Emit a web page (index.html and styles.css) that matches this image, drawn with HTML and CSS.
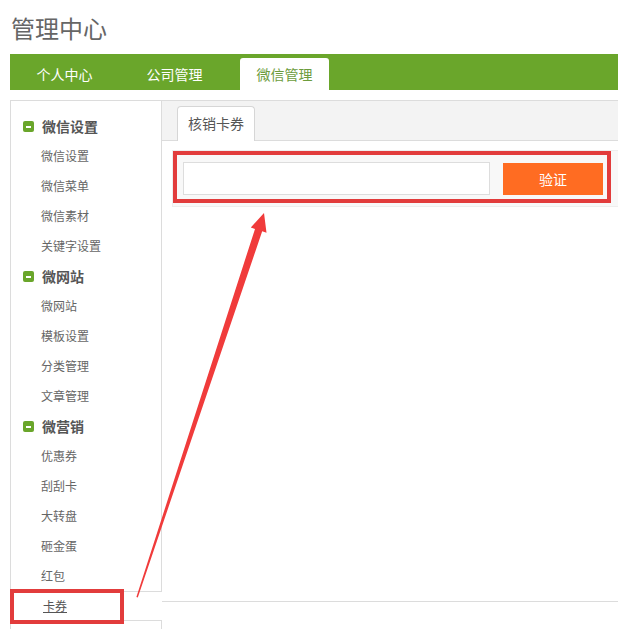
FILE: index.html
```html
<!DOCTYPE html>
<html lang="zh-CN">
<head>
<meta charset="utf-8">
<title>管理中心</title>
<link rel="stylesheet" href="styles.css">
</head>
<body>
<div class="page">
  <h1 class="title">管理中心</h1>
  <div class="nav">
    <div class="nav-item">个人中心</div>
    <div class="nav-item">公司管理</div>
    <div class="nav-item active">微信管理</div>
  </div>
  <div class="main">
    <ul class="sidebar">
      <li class="group"><span class="minus"></span>微信设置</li>
      <li class="item">微信设置</li>
      <li class="item">微信菜单</li>
      <li class="item">微信素材</li>
      <li class="item">关键字设置</li>
      <li class="group"><span class="minus"></span>微网站</li>
      <li class="item">微网站</li>
      <li class="item">模板设置</li>
      <li class="item">分类管理</li>
      <li class="item">文章管理</li>
      <li class="group"><span class="minus"></span>微营销</li>
      <li class="item">优惠券</li>
      <li class="item">刮刮卡</li>
      <li class="item">大转盘</li>
      <li class="item">砸金蛋</li>
      <li class="item">红包</li>
      <li class="item current"><span class="label">卡券</span><span class="mark-box"></span></li>
    </ul>
    <div class="content">
      <div class="tabs">
        <div class="tab">核销卡券</div>
      </div>
      <div class="form-row">
        <input class="code-input" type="text">
        <button class="verify-btn" type="button">验证</button>
        <span class="mark-rect"></span>
      </div>
    </div>
  </div>
  <svg class="arrow" width="618" height="629" viewBox="0 0 618 629" xmlns="http://www.w3.org/2000/svg">
    <polygon points="264,213 266.5,232.8 262.2,231.3 137.8,597.4 136.4,597 255,228.9 250.8,227.6" fill="#f03b3b"/>
  </svg>
</div>
</body>
</html>
```
FILE: styles.css
```css
html, body {
  margin: 0;
  padding: 0;
  overflow: hidden;
  background: #fff;
}
body {
  font-family: "Noto Sans CJK SC", "Noto Sans", sans-serif;
  color: #666;
}
.page {
  position: relative;
  padding-left: 10px;
  height: 629px;
  box-sizing: border-box;
}
.title {
  margin: 0;
  padding: 12px 0 0 1px;
  height: 44px;
  box-sizing: border-box;
  font-size: 24px;
  line-height: 32px;
  font-weight: normal;
  color: #666;
  margin-bottom: 10px;
}
.nav {
  display: flex;
  gap: 21px;
  height: 36px;
  box-sizing: border-box;
  padding: 4px 0 0 10px;
  background: #6aa62b;
}
.nav-item {
  width: 89px;
  height: 32px;
  line-height: 32px;
  text-align: center;
  font-size: 14px;
  color: #fff;
}
.nav-item.active {
  background: #fff;
  color: #6c9c3c;
  border-radius: 3px 3px 0 0;
}
.main {
  display: flex;
  align-items: flex-start;
  margin-top: 10px;
}
.sidebar {
  list-style: none;
  margin: 0;
  width: 150px;
  flex: none;
  padding: 10px 0 8px 0;
  border: 1px solid #dcdcdc;
  border-bottom: none;
}
.sidebar li {
  height: 30px;
  line-height: 30px;
  white-space: nowrap;
}
.group {
  display: flex;
  align-items: center;
  padding-left: 12px;
  font-size: 14px;
  font-weight: bold;
  color: #555;
}
.minus {
  position: relative;
  width: 11px;
  height: 11px;
  margin-right: 8px;
  border-radius: 2px;
  background: #6aa62b;
}
.minus::after {
  content: "";
  position: absolute;
  left: 3px;
  top: 5px;
  width: 5px;
  height: 2px;
  background: #fff;
}
.item {
  padding-left: 30px;
  font-size: 12px;
  color: #666;
}
.item.current {
  position: relative;
  box-sizing: border-box;
  margin-right: -1px;
  padding-left: 32px;
  line-height: 28px;
  background: #fff;
  border-top: 1px solid #dcdcdc;
  border-bottom: 1px solid #dcdcdc;
  color: #555;
}
.item.current .label {
  text-decoration: underline;
}
.mark-box {
  position: absolute;
  left: -1px;
  top: -3px;
  width: 114px;
  height: 35px;
  box-sizing: border-box;
  border: 4px solid #e23c3c;
}
.content {
  flex: 1;
  height: 502px;
  box-sizing: border-box;
  border-top: 1px solid #dcdcdc;
  border-bottom: 1px solid #dcdcdc;
}
.tabs {
  display: flex;
  align-items: flex-end;
  height: 40px;
  box-sizing: border-box;
  background: #f3f3f3;
  border-bottom: 1px solid #dcdcdc;
  padding-left: 15px;
}
.tab {
  width: 78px;
  height: 35px;
  box-sizing: border-box;
  margin-bottom: -1px;
  background: #fff;
  border: 1px solid #d6d6d6;
  border-bottom: none;
  border-radius: 4px 4px 0 0;
  text-align: center;
  font-size: 14px;
  line-height: 33px;
  color: #555;
}
.form-row {
  position: relative;
  display: flex;
  align-items: center;
  gap: 13px;
  margin: 9px 0 0 10px;
  padding: 11px 10px;
  background: #f8f8f8;
  border: 1px solid #eeeeee;
  border-right: none;
}
.code-input {
  width: 307px;
  height: 33px;
  box-sizing: border-box;
  margin: 0;
  padding: 0 8px;
  border: 1px solid #dddddd;
  background: #fff;
  outline: none;
  font-family: inherit;
}
.verify-btn {
  width: 100px;
  height: 32px;
  margin: 0;
  padding: 0;
  border: none;
  background: #ff6c22;
  color: #fff;
  font-family: inherit;
  font-size: 14px;
}
.mark-rect {
  position: absolute;
  left: 0;
  top: 0;
  width: 438px;
  height: 52px;
  box-sizing: border-box;
  border: 4px solid #e23c3c;
  pointer-events: none;
}
.arrow {
  position: absolute;
  left: 0;
  top: 0;
  pointer-events: none;
}
```
